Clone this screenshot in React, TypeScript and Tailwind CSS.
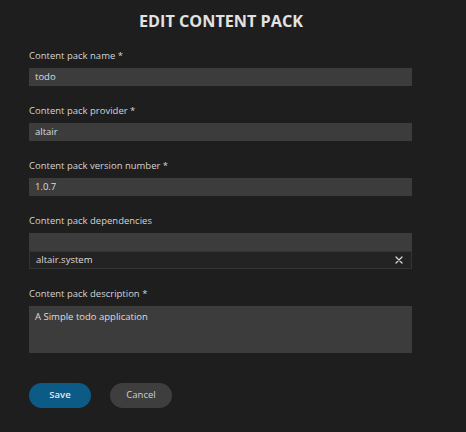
import React from "react";

const font = { fontFamily: '"Open Sans", "Noto Sans", sans-serif' };

const Field: React.FC<{ label: string; children: React.ReactNode }> = ({ label, children }) => (
  <div className="mb-[18px]">
    <div className="mb-[5px] h-[14px] text-[9.5px] leading-[14px] text-[#d4d4d4]">{label}</div>
    {children}
  </div>
);

const TextBox: React.FC<{ value: string }> = ({ value }) => (
  <div className="flex h-[18px] items-center bg-[#3c3c3c] px-[6px] text-[9.5px] text-[#dcdcdc]">{value}</div>
);

export default function App() {
  return (
    <div className="h-[432px] w-[466px] overflow-hidden bg-[#1e1e1e]" style={font}>
      <h1 className="w-[442px] pt-[10px] text-center text-[16.2px] font-bold leading-[22px] text-[#e2e2e2]">
        EDIT CONTENT PACK
      </h1>
      <div className="ml-[29px] mt-[17px] w-[383px]">
        <Field label="Content pack name *">
          <TextBox value="todo" />
        </Field>
        <Field label="Content pack provider *">
          <TextBox value="altair" />
        </Field>
        <Field label="Content pack version number *">
          <TextBox value="1.0.7" />
        </Field>
        <Field label="Content pack dependencies">
          <div className="h-[18px] bg-[#3c3c3c]" />
          <div className="flex h-[18px] items-center justify-between border border-[#333] bg-[#232323] pl-[6px] pr-[8px] text-[9.5px] text-[#dcdcdc]">
            <span>altair.system</span>
            <svg width="8" height="8" viewBox="0 0 8 8" stroke="#d8d8d8" strokeWidth="1.3" strokeLinecap="round">
              <path d="M1 1L7 7M7 1L1 7" />
            </svg>
          </div>
        </Field>
        <Field label="Content pack description *">
          <div className="h-[47px] bg-[#3c3c3c] px-[6px] pt-[4px] text-[9.5px] leading-[14px] text-[#dcdcdc]">
            A Simple todo application
          </div>
        </Field>
        <div className="mt-[30px] flex gap-[19px]">
          <button className="h-[25px] w-[62px] rounded-full bg-[#0c5a86] text-[9.5px] font-semibold text-[#e6e6e6]">
            Save
          </button>
          <button className="h-[25px] w-[62px] rounded-full bg-[#3e3e3e] text-[9.5px] text-[#cfcfcf]">
            Cancel
          </button>
        </div>
      </div>
    </div>
  );
}
